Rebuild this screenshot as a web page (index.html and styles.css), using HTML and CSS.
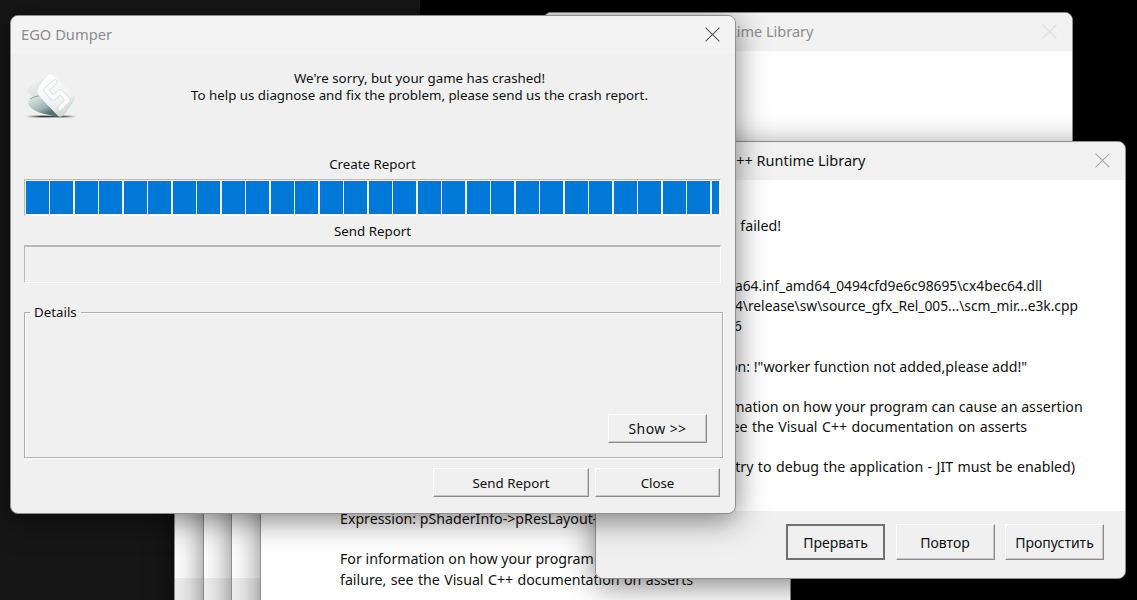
FILE: index.html
```html
<!DOCTYPE html>
<html lang="en">
<head>
<meta charset="utf-8">
<title>EGO Dumper</title>
<link rel="stylesheet" href="styles.css">
</head>
<body>
<div class="desktop">
  <div class="wall-left"></div>

  <div class="win stack s1"><div class="tbar"></div><div class="wbody"></div><div class="wfoot"></div></div>
  <div class="win stack s2"><div class="tbar"></div><div class="wbody"></div><div class="wfoot"></div></div>
  <div class="win stack s3"><div class="tbar"></div><div class="wbody"></div><div class="wfoot"></div></div>
  <div class="win stack s4">
    <div class="tbar"><span class="ttext">Microsoft Visual C++ Runtime Library</span></div>
    <div class="wbody">
      <p class="msg">Expression: pShaderInfo-&gt;pResLayout-&gt;GetDescriptor()</p>
      <p class="msg gap">For information on how your program can cause an assertion</p>
      <p class="msg wide">failure, see the Visual C++ documentation on asserts</p>
    </div>
  </div>

  <div class="win back">
    <div class="tbar"><span class="ttext dim">Microsoft Visual C++ Runtime Library</span>
      <svg class="x faint" viewBox="0 0 14 14"><path d="M.5.5l13 13M13.5.5l-13 13"/></svg></div>
    <div class="wbody"></div>
  </div>

  <div class="win front">
    <div class="tbar"><span class="ttext">Microsoft Visual C++ Runtime Library</span>
      <svg class="x" viewBox="0 0 14 14"><path d="M.5.5l13 13M13.5.5l-13 13"/></svg></div>
    <div class="wbody fbody">
      <p class="msg">Assertion failed!</p>
      <p class="msg gap2 path">Program: a64.inf_amd64_0494cfd9e6c98695\cx4bec64.dll</p>
      <p class="msg path">File: D:\a64\release\sw\source_gfx_Rel_005...\scm_mir...e3k.cpp</p>
      <p class="msg">Line: 1316</p>
      <p class="msg gap">Expression: !"worker function not added,please add!"</p>
      <p class="msg gap">For information on how your program can cause an assertion</p>
      <p class="msg wide">failure, see the Visual C++ documentation on asserts</p>
      <p class="msg gap wide">(Press Retry to debug the application - JIT must be enabled)</p>
    </div>
    <div class="wfoot ffoot">
      <button class="btn def">Прервать</button>
      <button class="btn">Повтор</button>
      <button class="btn">Пропустить</button>
    </div>
  </div>

  <div class="win main">
    <div class="tbar mainbar"><span class="ttext dim">EGO Dumper</span>
      <svg class="x dark" viewBox="0 0 14 14"><path d="M.5.5l13 13M13.5.5l-13 13"/></svg></div>
    <div class="mbody">
      <div class="head">
        <svg class="logo" viewBox="0 0 60 50" aria-hidden="true">
          <defs>
            <linearGradient id="side" x1="0.1" y1="0" x2="0.5" y2="1">
              <stop offset="0" stop-color="#f1f4f4"/><stop offset=".5" stop-color="#d9e1e0"/><stop offset=".82" stop-color="#9fb3b3"/><stop offset="1" stop-color="#557072"/>
            </linearGradient>
            <linearGradient id="face" x1="0.2" y1="0" x2="0.8" y2="1">
              <stop offset="0" stop-color="#ffffff"/><stop offset=".65" stop-color="#eff2f2"/><stop offset="1" stop-color="#c3cdcd"/>
            </linearGradient>
            <linearGradient id="floor" x1="0" y1="0" x2="1" y2="0">
              <stop offset="0" stop-color="#333" stop-opacity="0"/><stop offset=".3" stop-color="#333"/><stop offset=".75" stop-color="#555"/><stop offset="1" stop-color="#555" stop-opacity="0"/>
            </linearGradient>
          </defs>
          <rect x="4" y="45.6" width="50" height="1.8" fill="url(#floor)"/>
          <path d="M6 22Q4 20 8 17L24 7 36 46Q34 47 28 45 14 43 8 37 4 32 8 29L12 27Q7 25 6 22Z" fill="url(#side)"/>
          <path d="M8 29L12 27 21 25" fill="none" stroke="#8ea3a3" stroke-width="1"/>
          <path d="M17 17L26 5Q29 3 32 6L52 26Q54 29 52 31L42 45Q39 48 36 46L18 27Q14 22 17 17Z" fill="url(#face)"/>
          <path d="M33 12L24 20 31 28 38 22 46 30 38 38" fill="none" stroke="#d5dcdc" stroke-width="5.4" stroke-linejoin="round" stroke-linecap="round"/>
          <path d="M33 12L24 20 31 28 38 22 46 30 38 38" fill="none" stroke="#fbfcfc" stroke-width="4" stroke-linejoin="round" stroke-linecap="round"/>
        </svg>
        <p class="sorry">We're sorry, but your game has crashed!<br>To help us diagnose and fix the problem, please send us the crash report.</p>
      </div>
      <div class="plabel first">Create Report</div>
      <div class="pbox"><div class="pfill"></div></div>
      <div class="plabel">Send Report</div>
      <div class="pbox empty"></div>
      <fieldset class="group">
        <legend>Details</legend>
        <button class="btn show">Show &gt;&gt;</button>
      </fieldset>
      <div class="actions">
        <button class="btn send">Send Report</button>
        <button class="btn closeb">Close</button>
      </div>
    </div>
  </div>
</div>
</body>
</html>
```
FILE: styles.css
```css
* { box-sizing: border-box; }
html, body { margin: 0; height: 100%; overflow: hidden; background: #000; }
body { font-family: "Noto Sans", "Liberation Sans", sans-serif; font-size: 14px; color: #111; }
p { margin: 0; }

.desktop { position: relative; width: 1137px; height: 600px; overflow: hidden; background: #000; }
.wall-left { position: absolute; left: 0; top: 0; width: 420px; height: 600px; background: #161616; }

.win {
  position: absolute;
  display: flex;
  flex-direction: column;
  border: 1px solid #8e8e8e;
  border-radius: 8px;
  overflow: hidden;
  background: #fff;
  box-shadow: 0 6px 30px rgba(0, 0, 0, .5);
}
.tbar {
  flex: none;
  height: 38px;
  display: flex;
  align-items: center;
  justify-content: space-between;
  padding: 0 15px 2px 19px;
  background: #f1f1f1;
}
.ttext { font-size: 14.5px; color: #111; white-space: nowrap; }
.ttext.dim { color: #8c8c8c; }
.x { width: 15px; height: 15px; fill: none; stroke: #a9a9a9; stroke-width: 1; }
.x.faint { stroke: #dcdcdc; }
.x.dark { stroke: #555; }
.wbody { flex: 1; background: #fff; }
.wfoot { flex: none; height: 67px; background: #f0f0f0; }

.stack { top: 208px; height: 438px; width: 531px; }
.s1 { left: 174px; z-index: 1; }
.s2 { left: 203px; z-index: 2; }
.s3 { left: 231px; z-index: 3; }
.s4 { left: 260px; top: 293px; z-index: 4; }
.s4 .wbody { padding: 177px 0 0 79px; }

.back { left: 543px; top: 12px; width: 530px; height: 438px; z-index: 5; }

.front { left: 595px; top: 141px; width: 531px; height: 438px; z-index: 6; }
.fbody { padding: 35.5px 0 0 78px; }
.msg { font-size: 14.2px; line-height: 20.2px; white-space: nowrap; }
.msg.path { font-size: 13.8px; word-spacing: -3px; }
.msg.wide { word-spacing: .7px; }
.gap { margin-top: 20.2px; }
.gap2 { margin-top: 40px; }
.ffoot { display: flex; justify-content: flex-end; gap: 10.5px; padding: 13px 21px 0 0; }

.btn {
  font: inherit;
  color: #111;
  background: #f0f0f0;
  height: 36px;
  width: 99px;
  padding: 0;
  border: 1px solid;
  border-color: #fff #8a8a8a #8a8a8a #fff;
  border-radius: 0;
  box-shadow: inset -1px -1px 0 #c8c8c8;
}
.btn.def { border: 2px solid #707070; box-shadow: none; }

.main { left: 10px; top: 15px; width: 726px; height: 499px; z-index: 7; background: #f0f0f0; border-color: #8f8f8f; font-size: 13.3px; }
.mainbar { background: #f3f3f3; padding-left: 10px; }
.mainbar .ttext { font-size: 14.7px; }
.mbody { flex: 1; display: flex; flex-direction: column; padding: 0 14px 0 13px; }
.head { display: flex; height: 85px; }
.logo { flex: none; width: 60px; height: 50px; margin: 16px 36px 0 -2px; }
.sorry { flex: 1; padding-top: 16px; text-align: center; line-height: 17px; }
.plabel { height: 20px; line-height: 20px; text-align: center; margin-top: 5px; }
.plabel.first { margin-top: 15px; }
.pbox {
  height: 37px;
  margin-top: 5px;
  border: 1px solid;
  border-color: #b9b9b9 #fff #fff #b9b9b9;
  padding: 1px;
}
.pbox.empty { height: 38px; margin-top: 4px; border-top-width: 2px; }
.pfill {
  height: 100%;
  background: repeating-linear-gradient(to right, #0078d7 0 23px, #f0f0f0 23px 24.5px);
}
.group {
  height: 156px;
  margin: 19px -2px 0 0;
  padding: 0 15px 0 0;
  min-width: 0;
  display: flex;
  justify-content: flex-end;
  border: 1px solid #aeaeae;
  box-shadow: 1px 1px 0 #fff, inset 1px 1px 0 #fff;
}
.group legend { margin-left: 5px; padding: 0 4px; line-height: 20px; height: 20px; }
.show { height: 29px; width: 99px; margin-top: 92px; font-size: 14px; letter-spacing: .4px; }
.actions { display: flex; justify-content: flex-end; gap: 6px; margin: 10px 1px 0 0; }
.send { width: 156px; height: 29px; }
.closeb { width: 125px; height: 29px; }
```
